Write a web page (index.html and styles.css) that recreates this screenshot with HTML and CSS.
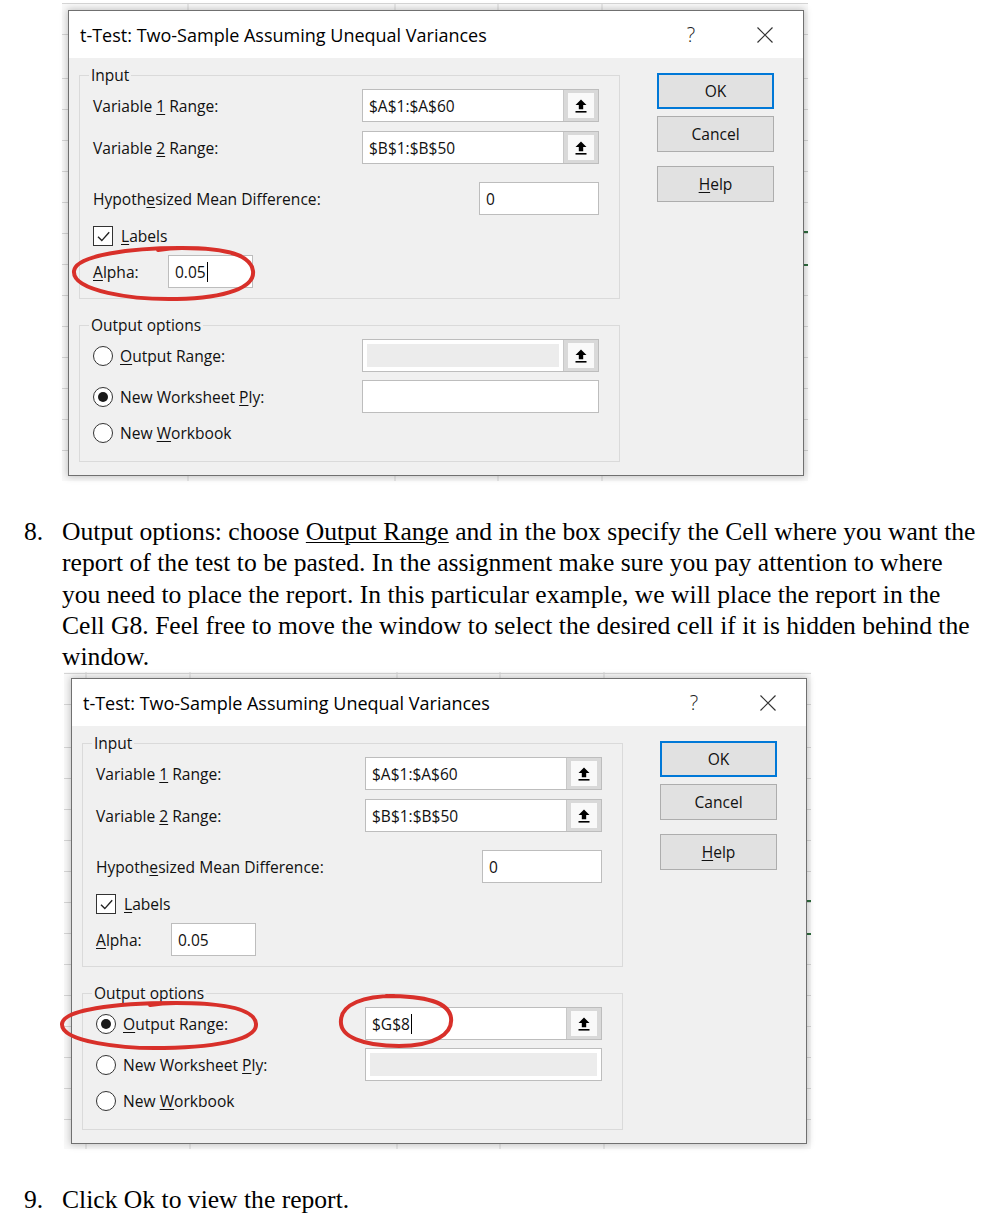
FILE: index.html
```html
<!DOCTYPE html>
<html>
<head>
<meta charset="utf-8">
<title>t-Test dialog steps</title>
<link rel="stylesheet" href="styles.css">
</head>
<body>

<div class="shot shot-a">
  <div class="dialog">
    <div class="titlebar">
      <span class="title">t-Test: Two-Sample Assuming Unequal Variances</span>
      <span class="qmark">?</span>
      <svg class="close" viewBox="0 0 16 16" width="16" height="16"><path d="M0.5 0.5L15.5 15.5M15.5 0.5L0.5 15.5"/></svg>
    </div>
    <div class="body">
      <div class="groups">
        <fieldset class="group">
          <legend>Input</legend>
          <div class="rows rows-input">
            <div class="row r1">
              <span class="label">Variable <u>1</u> Range:</span>
              <div class="field wide"><span class="val">$A$1:$A$60</span><span class="pick"><span class="pick-in"><svg viewBox="0 0 12 14" width="12" height="14"><path d="M6 0.5L11.5 6H8.2V10.2H3.8V6H0.5Z"/><rect x="0.5" y="12" width="11" height="1.6"/></svg></span></span></div>
            </div>
            <div class="row r2">
              <span class="label">Variable <u>2</u> Range:</span>
              <div class="field wide"><span class="val">$B$1:$B$50</span><span class="pick"><span class="pick-in"><svg viewBox="0 0 12 14" width="12" height="14"><path d="M6 0.5L11.5 6H8.2V10.2H3.8V6H0.5Z"/><rect x="0.5" y="12" width="11" height="1.6"/></svg></span></span></div>
            </div>
            <div class="row r3">
              <span class="label">Hypoth<u>e</u>sized Mean Difference:</span>
              <div class="field narrow"><span class="val">0</span></div>
            </div>
            <div class="row r4">
              <span class="check"><svg viewBox="0 0 17 17" width="17" height="17"><path d="M3 8.8L6.8 12.6L14.2 4.2"/></svg></span>
              <span class="label"><u>L</u>abels</span>
            </div>
            <div class="row r5">
              <span class="label alpha-label"><u>A</u>lpha:</span>
              <div class="field alpha"><span class="val"><span class="caret">0.05</span></span></div>
            </div>
          </div>
        </fieldset>
        <fieldset class="group group-out">
          <legend>Output options</legend>
          <div class="rows rows-output">
            <div class="row o1">
              <span class="radio"></span>
              <span class="label"><u>O</u>utput Range:</span>
              <div class="field wide disabled"><span class="val"></span><span class="pick"><span class="pick-in"><svg viewBox="0 0 12 14" width="12" height="14"><path d="M6 0.5L11.5 6H8.2V10.2H3.8V6H0.5Z"/><rect x="0.5" y="12" width="11" height="1.6"/></svg></span></span></div>
            </div>
            <div class="row o2">
              <span class="radio on"></span>
              <span class="label">New Worksheet <u>P</u>ly:</span>
              <div class="field wide"><span class="val"></span></div>
            </div>
            <div class="row o3">
              <span class="radio"></span>
              <span class="label">New <u>W</u>orkbook</span>
            </div>
          </div>
        </fieldset>
      </div>
      <div class="buttons">
        <div class="btn btn-default">OK</div>
        <div class="btn btn-cancel">Cancel</div>
        <div class="btn btn-help"><u>H</u>elp</div>
      </div>
    </div>
  </div>
  <svg class="marks" viewBox="0 0 746 478" width="746" height="478">
    <path d="M118 245 C70 245 14 252 12 268 C10 288 70 297 115 296 C165 295 193 284 191 268 C189 252 165 245 120 245 C110 245 102 246 96 247"/>
  </svg>
</div>

<div class="step step-8">
  <span class="num">8.</span>
  <p class="txt">Output options: choose <u>Output Range</u> and in the box specify the Cell where you want the<br>report of the test to be pasted. In the assignment make sure you pay attention to where<br>you need to place the report. In this particular example, we will place the report in the<br>Cell G8. Feel free to move the window to select the desired cell if it is hidden behind the<br>window.</p>
</div>

<div class="shot shot-b">
  <div class="dialog">
    <div class="titlebar">
      <span class="title">t-Test: Two-Sample Assuming Unequal Variances</span>
      <span class="qmark">?</span>
      <svg class="close" viewBox="0 0 16 16" width="16" height="16"><path d="M0.5 0.5L15.5 15.5M15.5 0.5L0.5 15.5"/></svg>
    </div>
    <div class="body">
      <div class="groups">
        <fieldset class="group">
          <legend>Input</legend>
          <div class="rows rows-input">
            <div class="row r1">
              <span class="label">Variable <u>1</u> Range:</span>
              <div class="field wide"><span class="val">$A$1:$A$60</span><span class="pick"><span class="pick-in"><svg viewBox="0 0 12 14" width="12" height="14"><path d="M6 0.5L11.5 6H8.2V10.2H3.8V6H0.5Z"/><rect x="0.5" y="12" width="11" height="1.6"/></svg></span></span></div>
            </div>
            <div class="row r2">
              <span class="label">Variable <u>2</u> Range:</span>
              <div class="field wide"><span class="val">$B$1:$B$50</span><span class="pick"><span class="pick-in"><svg viewBox="0 0 12 14" width="12" height="14"><path d="M6 0.5L11.5 6H8.2V10.2H3.8V6H0.5Z"/><rect x="0.5" y="12" width="11" height="1.6"/></svg></span></span></div>
            </div>
            <div class="row r3">
              <span class="label">Hypoth<u>e</u>sized Mean Difference:</span>
              <div class="field narrow"><span class="val">0</span></div>
            </div>
            <div class="row r4">
              <span class="check"><svg viewBox="0 0 17 17" width="17" height="17"><path d="M3 8.8L6.8 12.6L14.2 4.2"/></svg></span>
              <span class="label"><u>L</u>abels</span>
            </div>
            <div class="row r5">
              <span class="label alpha-label"><u>A</u>lpha:</span>
              <div class="field alpha"><span class="val">0.05</span></div>
            </div>
          </div>
        </fieldset>
        <fieldset class="group group-out">
          <legend>Output options</legend>
          <div class="rows rows-output">
            <div class="row o1">
              <span class="radio on"></span>
              <span class="label"><u>O</u>utput Range:</span>
              <div class="field wide"><span class="val"><span class="caret">$G$8</span></span><span class="pick"><span class="pick-in"><svg viewBox="0 0 12 14" width="12" height="14"><path d="M6 0.5L11.5 6H8.2V10.2H3.8V6H0.5Z"/><rect x="0.5" y="12" width="11" height="1.6"/></svg></span></span></div>
            </div>
            <div class="row o2">
              <span class="radio"></span>
              <span class="label">New Worksheet <u>P</u>ly:</span>
              <div class="field wide disabled"><span class="val"></span></div>
            </div>
            <div class="row o3">
              <span class="radio"></span>
              <span class="label">New <u>W</u>orkbook</span>
            </div>
          </div>
        </fieldset>
      </div>
      <div class="buttons">
        <div class="btn btn-default">OK</div>
        <div class="btn btn-cancel">Cancel</div>
        <div class="btn btn-help"><u>H</u>elp</div>
      </div>
    </div>
  </div>
  <svg class="marks" viewBox="0 0 747 477" width="747" height="477">
    <path d="M110 331 C50 331 -1 338 -2 352 C-3 370 60 377 100 376 C160 375 193 366 192 352 C191 338 165 331 112 331 C100 331 92 332 86 333"/>
    <path d="M330 324 C300 324 278 332 277 348 C275 365 300 374 335 374 C370 374 389 362 387 346 C385 330 362 324 322 324"/>
  </svg>
</div>

<div class="step step-9">
  <span class="num">9.</span>
  <p class="txt">Click Ok to view the report.</p>
</div>

</body>
</html>
```

FILE: styles.css
```css
* { box-sizing: border-box; }
html, body { margin: 0; padding: 0; background: #fff; }
body {
  font-family: "Liberation Serif", "Times New Roman", serif;
  color: #000;
}

/* ---------- screenshot frames (spreadsheet grid behind the dialog) ---------- */
.shot {
  position: relative;
  background-color: #f9f9f9;
  background-image:
    linear-gradient(#2e6b3e, #2e6b3e),
    linear-gradient(#2e6b3e, #2e6b3e),
    repeating-linear-gradient(to right, transparent 0 102.5px, #d5d5d5 102.5px 103.5px),
    repeating-linear-gradient(to bottom, transparent 0 30px, #d5d5d5 30px 31px);
  background-repeat: no-repeat, no-repeat, repeat, repeat;
  background-size: 6px 2px, 6px 2px, auto, auto;
}
.shot-a {
  margin: 3px 0 0 62px;
  width: 746px;
  height: 478px;
  padding: 7px 0 0 6px;
  background-position: 741px 228px, 741px 261px, -80.5px 0, 0 45px;
}
.shot-b {
  margin: 0 0 0 64px;
  width: 747px;
  height: 477px;
  padding: 6px 0 0 7px;
  background-position: 742px 228px, 742px 261px, -80.5px 0, 0 45px;
}
.marks {
  position: absolute;
  left: 0;
  top: 0;
  overflow: visible;
  pointer-events: none;
  fill: none;
  stroke: #d8302a;
  stroke-width: 4;
  stroke-linecap: round;
}

/* ---------- dialog ---------- */
.dialog {
  width: 736px;
  height: 466px;
  border: 1px solid #707070;
  background: #f0f0f0;
  display: flex;
  flex-direction: column;
  box-shadow: 0 0 7px 1px rgba(0, 0, 0, 0.22);
  font-family: "Open Sans", "Noto Sans", sans-serif;
  color: #111;
}
.titlebar {
  height: 47px;
  flex-shrink: 0;
  background: #fff;
  display: flex;
  align-items: center;
  padding: 0 30px 0 11px;
}
.title {
  flex: 1;
  font-size: 18px;
  color: #000;
}
.qmark {
  width: 20px;
  text-align: center;
  font-size: 20px;
  font-weight: 300;
  margin-right: 56px;
  color: #222;
}
.close {
  fill: none;
  stroke: #333;
  stroke-width: 1.2;
}
.body {
  flex: 1;
  display: flex;
  gap: 37px;
  padding: 7px 29px 0 10px;
}
.groups { width: 541px; }
.group {
  margin: 0;
  padding: 0;
  min-width: 0;
  border: 1px solid #dadada;
}
.group legend {
  margin-left: 9px;
  padding: 0 2px;
  font-size: 15.5px;
  line-height: 20px;
}
.group-out { margin-top: 16px; }
.rows { padding: 0 20px 10px 13px; }
.rows-output { padding-bottom: 18px; }

.row {
  display: flex;
  align-items: center;
  font-size: 15.6px;
}
.label { flex: 1; white-space: nowrap; }
u { text-underline-offset: 2px; text-decoration-thickness: 1px; }

.r1 { margin-top: 4px; height: 33px; }
.r2 { margin-top: 9px; height: 33px; }
.r3 { margin-top: 18px; height: 33px; }
.r4 { margin-top: 11px; height: 20px; }
.r5 { margin-top: 9px; height: 33px; }
.o1 { margin-top: 4px; height: 33px; }
.o2 { margin-top: 8px; height: 33px; }
.o3 { margin-top: 10px; height: 20px; }

.alpha-label { flex: 0 0 75px; }

.field {
  height: 33px;
  display: flex;
  background: #fff;
  border: 1px solid #bdbdbd;
  font-size: 15.5px;
}
.field.wide { width: 237px; }
.field.narrow { width: 120px; }
.field.alpha { width: 85px; }
.field .val {
  flex: 1;
  display: flex;
  align-items: center;
  padding-left: 6px;
  white-space: nowrap;
}
.field.disabled .val {
  margin: 4px;
  background: #ececec;
}
.caret {
  border-right: 1px solid #000;
  padding-right: 1px;
  line-height: 20px;
}
.pick {
  width: 35px;
  background: #d9d9d9;
  border-left: 1px solid #c8c8c8;
  padding: 3px 4px;
  display: flex;
}
.pick-in {
  flex: 1;
  background: #f9f9f9;
  display: flex;
  align-items: center;
  justify-content: center;
}
.pick-in svg { fill: #000; }

.check {
  width: 20px;
  height: 20px;
  border: 1px solid #333;
  background: #fff;
  display: flex;
  align-items: center;
  justify-content: center;
  margin-right: 8px;
  flex-shrink: 0;
}
.check svg {
  fill: none;
  stroke: #222;
  stroke-width: 1.4;
}

.radio {
  width: 20px;
  height: 20px;
  border-radius: 50%;
  border: 1px solid #333;
  background: #fff;
  display: flex;
  align-items: center;
  justify-content: center;
  margin-right: 7px;
  flex-shrink: 0;
}
.radio.on::after {
  content: "";
  width: 10px;
  height: 10px;
  border-radius: 50%;
  background: #1a1a1a;
}

/* ---------- buttons ---------- */
.buttons {
  width: 117px;
  padding-top: 8px;
}
.btn {
  height: 36px;
  border: 1px solid #adadad;
  background: #e1e1e1;
  display: flex;
  align-items: center;
  justify-content: center;
  font-size: 15.6px;
  color: #111;
}
.btn-default { border: 2px solid #0078d7; }
.btn-cancel { margin-top: 7px; }
.btn-help { margin-top: 14px; }

/* ---------- document text ---------- */
.step {
  display: flex;
  padding-left: 24px;
  font-size: 25.6px;
  line-height: 31.25px;
}
.step .num { flex: 0 0 38px; }
.step .txt { margin: 0; width: 930px; white-space: nowrap; }
.step-8 { margin-top: 35px; }
.step-9 { margin-top: 35px; }
```
